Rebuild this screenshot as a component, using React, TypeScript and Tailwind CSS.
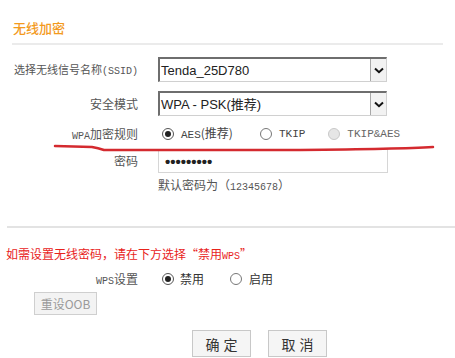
import React from "react";

const font = { fontFamily: '"Noto Sans CJK SC", "Liberation Sans", sans-serif' };
const mono = { fontFamily: '"Liberation Mono", monospace' };

function Radio({ state }: { state: "on" | "off" | "disabled" }) {
  if (state === "on")
    return (
      <span className="w-[12px] h-[12px] rounded-full border border-[#555] bg-white flex items-center justify-center shrink-0">
        <span className="w-[6px] h-[6px] rounded-full bg-[#222]" />
      </span>
    );
  if (state === "off")
    return <span className="w-[12px] h-[12px] rounded-full border border-[#777] bg-white shrink-0" />;
  return <span className="w-[12px] h-[12px] rounded-full border border-[#c8c8c8] bg-[#e6e6e6] shrink-0" />;
}

function Select({ value }: { value: string }) {
  return (
    <div className="w-[229px] h-[25px] flex border-t-2 border-l-2 border-t-[#6e6e6e] border-l-[#6e6e6e] border-r border-b border-r-[#d0d0d0] border-b-[#d0d0d0] bg-white">
      <div
        className="flex-1 flex items-center pl-[1px] pt-[2px] text-[13px] text-[#222]"
        style={{ fontFamily: '"Liberation Sans", "Noto Sans CJK SC", sans-serif' }}
      >
        {value}
      </div>
      <div className="w-[16px] h-full bg-[#f2f2f2] border-l border-[#a8a8a8] flex items-center justify-center">
        <svg width="10" height="7" viewBox="0 0 10 7">
          <path d="M1 1.5 L5 5.2 L9 1.5" fill="none" stroke="#111" strokeWidth="2" />
        </svg>
      </div>
    </div>
  );
}

export default function App() {
  return (
    <div className="w-[455px] h-[358px] bg-white relative overflow-hidden text-[#555]" style={font}>
      <div className="pt-[19px] pl-[13px] text-[13px] leading-[18px] text-[#f39a1e] font-medium">无线加密</div>
      <div className="mt-[6px] ml-[12px] mr-[12px] h-[2px] bg-[#ebebeb]" />

      <div className="mt-[12px] flex items-center h-[25px]">
        <div className="w-[138px] text-right text-[11px] whitespace-nowrap text-[#555]">
          选择无线信号名称<span className="text-[10px]" style={mono}>(SSID)</span>
        </div>
        <div className="ml-[20px]">
          <Select value="Tenda_25D780" />
        </div>
      </div>

      <div className="mt-[9px] flex items-center h-[25px]">
        <div className="w-[138px] text-right text-[12px]">安全模式</div>
        <div className="ml-[20px]">
          <Select value="WPA - PSK(推荐)" />
        </div>
      </div>

      <div className="mt-[7px] flex items-center h-[22px] text-[12px]">
        <div className="w-[138px] text-right whitespace-nowrap">
          <span className="text-[10px]" style={mono}>WPA</span>加密规则
        </div>
        <div className="ml-[24px] flex items-center gap-[7px]">
          <Radio state="on" />
          <span className="text-[#444] whitespace-nowrap">
            <span className="text-[11px]" style={mono}>AES</span>(推荐)
          </span>
        </div>
        <div className="ml-[27px] flex items-center gap-[7px]">
          <Radio state="off" />
          <span className="text-[11px] text-[#444]" style={mono}>TKIP</span>
        </div>
        <div className="ml-[23px] flex items-center gap-[7px]">
          <Radio state="disabled" />
          <span className="text-[11px] text-[#666]" style={mono}>TKIP&amp;AES</span>
        </div>
      </div>

      <div className="mt-[4px] flex items-center h-[24px]">
        <div className="w-[138px] text-right text-[12px]">密码</div>
        <div
          className="ml-[20px] w-[230px] h-[24px] border border-[#d6d6d6] flex items-center pl-[6px] text-[#222] text-[15px] font-bold leading-none"
          style={{ fontFamily: '"Liberation Sans", sans-serif' }}
        >
          •••••••••
        </div>
      </div>

      <div className="mt-[4px] ml-[158px] text-[12px] leading-[15px] text-[#555]">
        默认密码为（<span className="text-[10px]" style={mono}>12345678</span>）
      </div>

      <div className="mt-[31px] ml-[7px] h-[2px] bg-[#e3e3e3]" />

      <div className="mt-[19px] ml-[6px] text-[12px] leading-[14px] text-[#e8231c]">
        如需设置无线密码，请在下方选择“禁用<span className="text-[10px]" style={mono}>WPS</span>”
      </div>

      <div className="mt-[7px] flex items-center h-[16px] text-[12px]">
        <div className="w-[138px] text-right">
          <span className="text-[10px]" style={mono}>WPS</span>设置
        </div>
        <div className="ml-[24px] flex items-center gap-[6px]">
          <Radio state="on" />
          <span className="text-[#333]">禁用</span>
        </div>
        <div className="ml-[26px] flex items-center gap-[7px]">
          <Radio state="off" />
          <span className="text-[#333]">启用</span>
        </div>
      </div>

      <div className="mt-[5px] ml-[34px] w-[63px] h-[23px] border border-[#cfcfcf] bg-[#f3f3f3] flex items-center justify-center text-[12px] text-[#9a9a9a]">
        重设OOB
      </div>

      <div className="mt-[15px] ml-[192px] flex gap-[17px]">
        <div className="w-[59px] h-[27px] border border-[#c8c8c8] bg-[#f5f5f5] flex items-center justify-center text-[14px] leading-[18px] text-[#333] tracking-[4px] pl-[4px]">
          确定
        </div>
        <div className="w-[59px] h-[27px] border border-[#c8c8c8] bg-[#f5f5f5] flex items-center justify-center text-[14px] leading-[18px] text-[#333] tracking-[4px] pl-[4px]">
          取消
        </div>
      </div>

      <svg className="absolute left-0 top-0 pointer-events-none" width="455" height="358">
        <path
          d="M55 146 L92 147 Q98 148 104 150 L300 150 Q400 149 433 147"
          fill="none"
          stroke="#d42a2f"
          strokeWidth="2.5"
          strokeLinecap="round"
        />
      </svg>
    </div>
  );
}
